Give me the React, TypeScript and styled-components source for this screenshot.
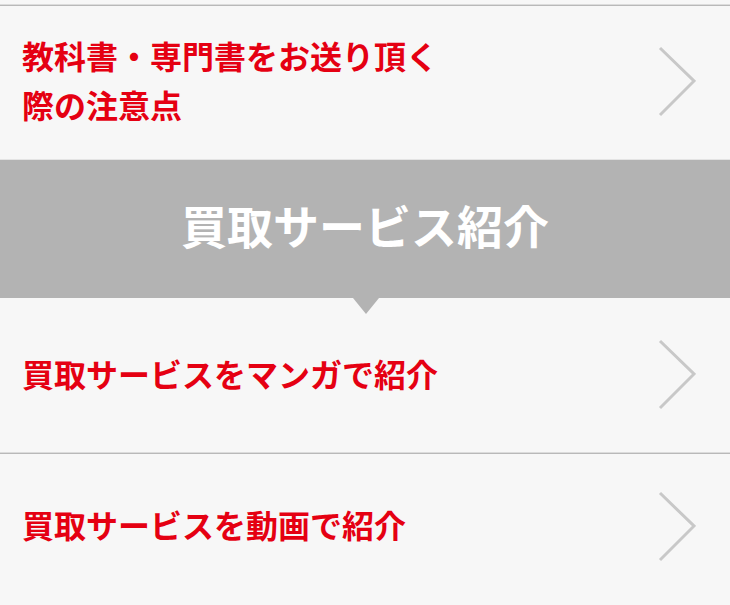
import styled, { createGlobalStyle } from "styled-components";

const GlobalStyle = createGlobalStyle`
  html, body {
    margin: 0;
    padding: 0;
    background: #f7f7f7;
    font-family: "Noto Sans CJK JP", "Noto Sans", sans-serif;
  }
`;

const Page = styled.div`
  padding-top: 4px;
  background: #f7f7f7;
`;

const Menu = styled.ul<{ topline?: boolean }>`
  list-style: none;
  margin: 0;
  padding: 0;
  border-top: ${(p) => (p.topline ? "1px solid #dcdcdc" : "none")};
  box-shadow: ${(p) => (p.topline ? "inset 0 1px 0 #b9b9b9" : "none")};
`;

const Item = styled.li<{ h: number; divider?: boolean; last?: boolean }>`
  display: flex;
  align-items: center;
  justify-content: space-between;
  height: ${(p) => p.h}px;
  padding: 0 34px 0 22px;
  box-sizing: border-box;
  border-bottom: ${(p) =>
    p.last ? "none" : p.divider ? "1px solid #dcdcdc" : "1px solid #e4e4e4"};
  box-shadow: ${(p) => (p.divider ? "0 1px 0 #b9b9b9" : "none")};
  margin-bottom: ${(p) => (p.divider ? "1px" : "0")};
  cursor: pointer;
`;

const Label = styled.span`
  color: #e50012;
  font-size: 32px;
  font-weight: 700;
  line-height: 49px;
  padding-bottom: 4px;
`;

const Heading = styled.h2`
  position: relative;
  margin: 0;
  height: 138px;
  box-sizing: border-box;
  padding-bottom: 10px;
  display: flex;
  align-items: center;
  justify-content: center;
  background: #b3b3b3;
  color: #fff;
  font-size: 46px;
  font-weight: 700;

  &::after {
    content: "";
    position: absolute;
    left: 50%;
    bottom: -16px;
    margin-left: -12px;
    border-left: 13px solid transparent;
    border-right: 13px solid transparent;
    border-top: 16px solid #b3b3b3;
  }
`;

const Chevron = () => (
  <svg width="38" height="72" viewBox="0 0 38 72" fill="none">
    <polyline
      points="2,2 36,35 2,69"
      stroke="#c8c8c8"
      strokeWidth="3"
      strokeLinejoin="miter"
    />
  </svg>
);

export default function App() {
  return (
    <Page>
      <GlobalStyle />
      <Menu topline>
        <Item h={155}>
          <Label>
            教科書・専門書をお送り頂く
            <br />
            際の注意点
          </Label>
          <Chevron />
        </Item>
      </Menu>
      <Heading>買取サービス紹介</Heading>
      <Menu>
        <Item h={155} divider>
          <Label>買取サービスをマンガで紹介</Label>
          <Chevron />
        </Item>
        <Item h={145} last>
          <Label>買取サービスを動画で紹介</Label>
          <Chevron />
        </Item>
      </Menu>
    </Page>
  );
}
